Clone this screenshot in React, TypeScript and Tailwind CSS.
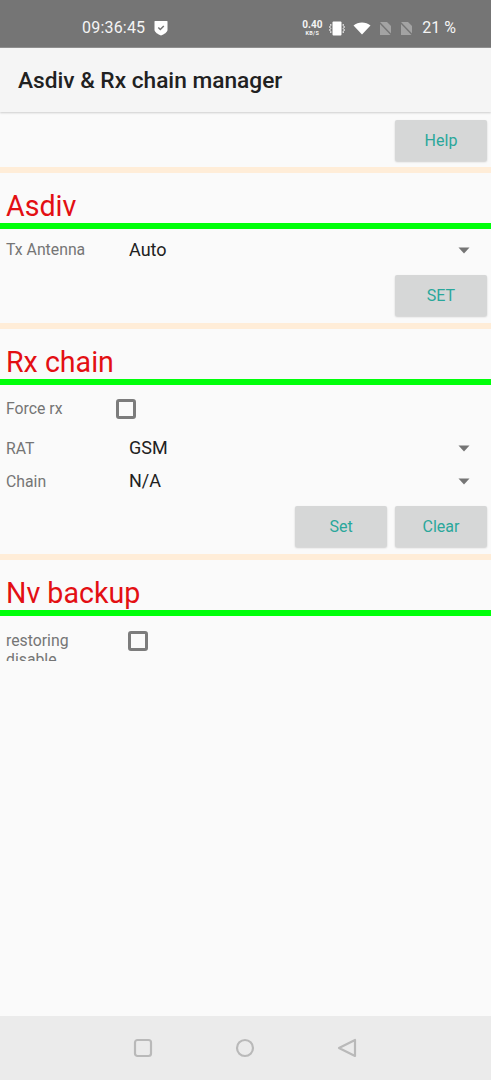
const roboto = "font-['Roboto','Liberation_Sans',sans-serif]";

function Caret() {
  return (
    <svg className="w-[12px] h-[7px] text-[#757575]" viewBox="0 0 12 7" fill="currentColor">
      <path d="M0.5 0.5h11L6 6.5z" />
    </svg>
  );
}

function Divider() {
  return <div className="h-[6px] bg-[#ffedd8]" />;
}

function SectionTitle({ title }: { title: string }) {
  return (
    <div>
      <div className="h-[50px] pl-[6px] flex items-end text-[28.6px] leading-[34px] text-[#e30f13]">
        {title}
      </div>
      <div className="h-[6px] bg-[#00ff0a]" />
    </div>
  );
}

function Btn({ label, className = "" }: { label: string; className?: string }) {
  return (
    <button className={`w-[92px] h-[41px] pt-[1px] rounded-[2px] bg-[#d6d7d7] text-[#2aa79b] text-[16px] shadow-[0_1px_2px_rgba(0,0,0,0.18)] ${className}`}>
      {label}
    </button>
  );
}

function Spinner({ label, value, className = "" }: { label: string; value: string; className?: string }) {
  return (
    <div className={`flex items-center pl-[6px] pr-[21px] ${className}`}>
      <span className="w-[123px] text-[15.8px] text-[#757575]">{label}</span>
      <span className="flex-1 mb-[2px] text-[18px] text-[#212121]">{value}</span>
      <Caret />
    </div>
  );
}

function Check({ className = "" }: { className?: string }) {
  return <div className={`w-[20px] h-[20px] rounded-[3px] border-[3px] border-[#7c7c7c] ${className}`} />;
}

function StatusBar() {
  return (
    <div className="h-[48px] pt-[9px] bg-[#757575] border-b border-[#8f8f8f] flex items-center text-white relative">
      <span className="ml-[82px] text-[16px] tracking-[0.2px] text-[#f4f4f4]">09:36:45</span>
      <svg className="ml-[9px] w-[14px] h-[16px]" viewBox="0 0 14 16">
        <path d="M1 1h12a.5.5 0 0 1 .5.5v8.500c0 2-3.500 4.500-6.500 5.500C4 14.500.5 12 .5 10V1.500A.5.5 0 0 1 1 1z" fill="#fff" />
        <path d="M4.300 7.500l2 2 3.500-3.500" fill="none" stroke="#757575" strokeWidth="1.500" />
      </svg>
      <div className="ml-auto mr-[35px] flex items-center">
        <div className="w-[20px] flex flex-col items-center text-[#f4f4f4] font-bold">
          <span className="text-[10px] leading-[10px]">0.40</span>
          <span className="text-[5.5px] leading-[6px] tracking-[0.3px]">KB/S</span>
        </div>
        <svg className="ml-[7px] w-[16px] h-[15px]" viewBox="0 0 16 15">
          <rect x="3.500" y="0.500" width="9" height="14" rx="1" fill="#fff" />
          <path d="M1.800 3v1.500L0.500 6l1.300 1.500L0.500 9l1.300 1.500V12M14.200 3v1.500L15.500 6l-1.300 1.500L15.500 9l-1.300 1.500V12" fill="none" stroke="#fff" strokeWidth="1" />
        </svg>
        <svg className="ml-[8px] w-[18px] h-[14px]" viewBox="0 0 18 14">
          <path d="M0.500 4.500C5 .5 13 .5 17.500 4.500L9 13.500z" fill="#fff" />
        </svg>
        <svg className="ml-[8px] w-[13px] h-[15px]" viewBox="0 0 13 15">
          <path d="M1 14V1h7l4 4v9z" fill="#a3a3a3" />
          <path d="M0 1l13 13.500" stroke="#757575" strokeWidth="1.500" />
        </svg>
        <svg className="ml-[8px] w-[13px] h-[15px]" viewBox="0 0 13 15">
          <path d="M1 14V1h7l4 4v9z" fill="#a3a3a3" />
          <path d="M0 1l13 13.500" stroke="#757575" strokeWidth="1.500" />
        </svg>
        <span className="ml-[9px] text-[16px] text-[#f4f4f4]">21 %</span>
      </div>
    </div>
  );
}

function NavBar() {
  return (
    <div className="h-[64px] bg-[#ebebeb] flex items-center justify-center gap-[82px] pr-[1px]">
      <svg className="w-[20px] h-[20px]" viewBox="0 0 20 20" fill="none" stroke="#b9b9b9" strokeWidth="2.200">
        <rect x="2" y="2" width="16" height="16" rx="2.500" />
      </svg>
      <svg className="w-[20px] h-[20px]" viewBox="0 0 20 20" fill="none" stroke="#b9b9b9" strokeWidth="2.200">
        <circle cx="10" cy="10" r="8" />
      </svg>
      <svg className="w-[20px] h-[20px]" viewBox="0 0 20 20" fill="none" stroke="#b9b9b9" strokeWidth="2.200" strokeLinejoin="round">
        <path d="M18 2v16L2 10z" />
      </svg>
    </div>
  );
}

export default function App() {
  return (
    <div className={`w-[491px] h-[1080px] flex flex-col overflow-hidden bg-[#fafafa] ${roboto}`}>
      <StatusBar />
      <div className="h-[64px] pt-[2px] bg-[#f5f5f5] flex items-center pl-[18px] text-[22.7px] font-medium text-[#212121] shadow-[0_1px_2px_rgba(0,0,0,0.18)]">
        Asdiv &amp; Rx chain manager
      </div>

      <div className="flex-1">
        <div className="flex justify-end pr-[4px] pt-[8px] pb-[6px]">
          <Btn label="Help" />
        </div>
        <Divider />

        <SectionTitle title="Asdiv" />
        <Spinner label="Tx Antenna" value="Auto" className="h-[42px]" />
        <div className="flex justify-end pr-[4px] pt-[4px] pb-[7px]">
          <Btn label="SET" />
        </div>
        <Divider />

        <SectionTitle title="Rx chain" />
        <div className="h-[48px] flex items-center pl-[6px]">
          <span className="w-[110px] text-[15.8px] text-[#757575]">Force rx</span>
          <Check />
        </div>
        <Spinner label="RAT" value="GSM" className="h-[33px] mt-[-1px]" />
        <Spinner label="Chain" value="N/A" className="h-[33px]" />
        <div className="flex justify-end gap-[8px] pr-[4px] pt-[8px] pb-[7px]">
          <Btn label="Set" />
          <Btn label="Clear" />
        </div>
        <Divider />

        <SectionTitle title="Nv backup" />
        <div className="flex pl-[6px] pt-[15px]">
          <div className="w-[122px] shrink-0">
            <div className="w-[90px] h-[30px] overflow-hidden text-[15.8px] leading-[19px] text-[#757575]">
              restoring disable
            </div>
          </div>
          <Check />
        </div>
      </div>

      <NavBar />
    </div>
  );
}
